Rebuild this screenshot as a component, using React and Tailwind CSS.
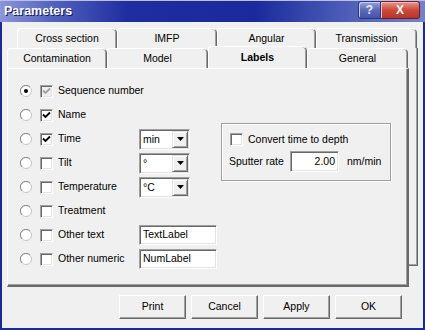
import React from "react";

const sunken =
  "border border-t-[#a0a0a0] border-l-[#a0a0a0] border-b-white border-r-white shadow-[inset_1px_1px_0_#696969,inset_-1px_-1px_0_#e3e3e3]";
const raised =
  "border border-t-[#e3e3e3] border-l-[#e3e3e3] border-b-[#696969] border-r-[#696969] shadow-[inset_1px_1px_0_#ffffff,inset_-1px_-1px_0_#a0a0a0]";

function Check({ disabled }) {
  return (
    <svg width="9" height="9" viewBox="0 0 9 9">
      <path
        d="M1 3.5 L3.5 6 L8 1.5"
        fill="none"
        stroke={disabled ? "#a0a0a0" : "#000"}
        strokeWidth="1.8"
      />
    </svg>
  );
}

function Checkbox({ checked, disabled }) {
  return (
    <div
      className={`w-[13px] h-[13px] shrink-0 flex items-center justify-center ${sunken} ${
        disabled ? "bg-[#f0f0f0]" : "bg-white"
      }`}
    >
      {checked && <Check disabled={disabled} />}
    </div>
  );
}

function Radio({ on }) {
  return (
    <svg width="12" height="12" viewBox="0 0 12 12" className="shrink-0">
      <circle cx="6" cy="6" r="5.5" fill="#ffffff" stroke="#c4c4c4" strokeWidth="1" />
      <path d="M10 2 A5.5 5.5 0 0 0 2 10" fill="none" stroke="#8a8a8a" strokeWidth="1" />
      {on && <circle cx="6" cy="6" r="2" fill="#000" />}
    </svg>
  );
}

function Arrow() {
  return (
    <svg width="7" height="4" viewBox="0 0 7 4">
      <path d="M0 0 H7 L3.5 4 Z" fill="#000" />
    </svg>
  );
}

function Combo({ value }) {
  return (
    <div className={`w-[51px] h-[21px] flex bg-white p-[1px] ${sunken}`}>
      <div className="flex-1 pl-[2px] leading-[17px]">{value}</div>
      <div
        className={`w-[16px] h-full bg-[#f0f0f0] flex items-center justify-center ${raised}`}
      >
        <Arrow />
      </div>
    </div>
  );
}

function TextBox({ value }) {
  return (
    <div className={`w-[78px] h-[20px] bg-white flex items-center px-[3px] ${sunken}`}>
      {value}
    </div>
  );
}

function Row({ radio, checked, disabled, label, children }) {
  return (
    <div className="h-[24px] flex items-center pl-[12px]">
      <Radio on={radio} />
      <div className="w-[8px] shrink-0" />
      <Checkbox checked={checked} disabled={disabled} />
      <div className="w-[86px] shrink-0 pl-[5px] whitespace-nowrap">{label}</div>
      {children}
    </div>
  );
}

function BackTab({ w, label }) {
  return (
    <div
      className={`${w} h-[20px] flex items-center justify-center bg-[#f0f0f0] border-l border-t border-l-white border-t-white border-r border-r-[#696969] rounded-tl-[3px] rounded-tr-[5px] shadow-[inset_-1px_0_0_#a0a0a0]`}
    >
      {label}
    </div>
  );
}

function FrontTab({ w, label, selected }) {
  if (selected) {
    return (
      <div
        className={`${w} h-[23px] -mb-[1px] relative z-20 flex items-center justify-center font-bold bg-[#f0f0f0] border-l border-t border-l-white border-t-white border-r border-r-[#696969] rounded-tl-[3px] rounded-tr-[5px] shadow-[inset_-1px_0_0_#a0a0a0] pb-[1px]`}
      >
        {label}
      </div>
    );
  }
  return (
    <div
      className={`${w} h-[20px] flex items-center justify-center bg-[#f0f0f0] border-l border-t border-l-white border-t-white border-r border-r-[#696969] rounded-tl-[3px] rounded-tr-[5px] shadow-[inset_-1px_0_0_#a0a0a0]`}
    >
      {label}
    </div>
  );
}

function Button({ label }) {
  return (
    <div
      className={`w-[67px] h-[24px] flex items-center justify-center bg-[#f0f0f0] border border-t-white border-l-white border-b-[#696969] border-r-[#696969] shadow-[inset_-1px_-1px_0_#a0a0a0]`}
    >
      {label}
    </div>
  );
}

export default function App() {
  return (
    <div className="w-[425px] h-[330px] flex flex-col bg-[#f0f0f0] overflow-hidden font-['Liberation_Sans',Arial,sans-serif] text-[10.5px] text-black">
      {/* Title bar */}
      <div className="h-[22px] shrink-0 flex items-start bg-[linear-gradient(to_right,#8d96da_0%,#5463bd_12%,#1e2ea0_30%,#1a2a9c_60%,#4f5fb8_82%,#7482c8_100%)] border-t border-t-[#b8c0ec]">
        <span className="pl-[4px] pt-[2px] text-white font-bold text-[12.5px] leading-[16px] [text-shadow:1px_1px_0_#101a60]">
          Parameters
        </span>
        <div className="ml-auto mr-[5px] flex">
          <div className="w-[23px] h-[18px] flex items-center justify-center rounded-l-[3px] border border-[#2a3680] bg-[linear-gradient(to_bottom,#98a4dc,#5a6ab8_50%,#4454a8)] text-[#e8ecff] font-bold text-[12px] shadow-[inset_1px_1px_0_#c8d0f0]">
            ?
          </div>
          <div className="w-[39px] h-[18px] flex items-center justify-center rounded-r-[3px] border border-l-0 border-[#6a2020] bg-[linear-gradient(to_bottom,#e8968a,#cc4a3c_50%,#b83428)] text-white font-bold text-[12px] shadow-[inset_1px_1px_0_#f0c0b8]">
            X
          </div>
        </div>
      </div>

      {/* Client */}
      <div className="flex-1 flex flex-col border-l-2 border-r-2 border-b-2 border-[#1a2a9c] pl-[5px] pt-[6px]">
        <div className="w-[411px]">
          {/* back row */}
          <div className="flex pl-[10px]">
            <BackTab w="w-[100px]" label="Cross section" />
            <BackTab w="w-[100px]" label="IMFP" />
            <BackTab w="w-[99px]" label="Angular" />
            <BackTab w="w-[101px]" label="Transmission" />
          </div>
          <div className="relative">
            {/* back page (behind) */}
            <div className="absolute left-[10px] top-0 w-[401px] h-[218px] z-0 bg-[#f0f0f0] border-r border-b border-r-[#696969] border-b-[#696969] shadow-[inset_-1px_-1px_0_#a0a0a0]" />
            {/* front row */}
            <div className="relative z-10 flex items-end h-[20px]">
              <FrontTab w="w-[100px]" label="Contamination" />
              <FrontTab w="w-[101px]" label="Model" />
              <FrontTab w="w-[99px]" label="Labels" selected />
              <FrontTab w="w-[101px]" label="General" />
            </div>
            {/* front page */}
            <div className="relative z-10 w-[402px] h-[219px] flex bg-[#f0f0f0] border-l border-t border-l-white border-t-white border-r-2 border-b-2 border-r-[#696969] border-b-[#696969] shadow-[inset_-1px_-1px_0_#a0a0a0] pt-[10px]">
              <div className="w-[211px] shrink-0 flex flex-col">
                <Row radio checked disabled label="Sequence number" />
                <Row checked label="Name" />
                <Row checked label="Time">
                  <Combo value="min" />
                </Row>
                <Row label="Tilt">
                  <Combo value="°" />
                </Row>
                <Row label="Temperature">
                  <Combo value="°C" />
                </Row>
                <Row label="Treatment" />
                <Row label="Other text">
                  <TextBox value="TextLabel" />
                </Row>
                <Row label="Other numeric">
                  <TextBox value="NumLabel" />
                </Row>
              </div>
              <div className="ml-[2px] mt-[44px] w-[170px] h-[58px] border border-[#a0a0a0] shadow-[1px_1px_0_#ffffff,inset_1px_1px_0_#ffffff] pl-[7px] pt-[9px] flex flex-col">
                <div className="flex items-center h-[13px] pl-[1px]">
                  <Checkbox />
                  <span className="pl-[5px]">Convert time to depth</span>
                </div>
                <div className="flex items-center mt-[5px] h-[21px]">
                  <span className="w-[61px]">Sputter rate</span>
                  <div className={`w-[49px] h-[21px] bg-white flex items-center justify-end px-[3px] ${sunken}`}>
                    2.00
                  </div>
                  <span className="pl-[8px]">nm/min</span>
                </div>
              </div>
            </div>
          </div>
        </div>
        {/* buttons */}
        <div className="flex gap-[5px] ml-[112px] mt-[8px]">
          <Button label="Print" />
          <Button label="Cancel" />
          <Button label="Apply" />
          <Button label="OK" />
        </div>
      </div>
    </div>
  );
}
